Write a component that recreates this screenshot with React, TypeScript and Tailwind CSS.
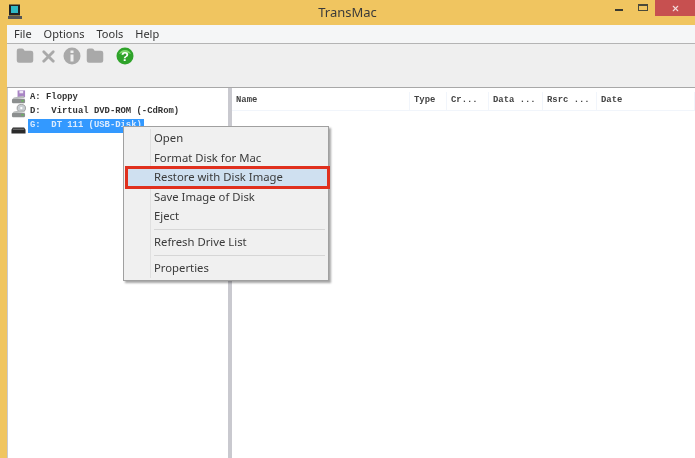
import { Folder, X } from 'lucide-react'

const menus = [
  { label: 'File', cls: 'ml-[7px]' },
  { label: 'Options', cls: 'ml-[12px]' },
  { label: 'Tools', cls: 'ml-[12px]' },
  { label: 'Help', cls: 'ml-[12px]' },
]

const columns = [
  { label: 'Name', cls: 'w-[178px]' },
  { label: 'Type', cls: 'w-[37px]' },
  { label: 'Cr...', cls: 'w-[42px]' },
  { label: 'Data ...', cls: 'w-[54px]' },
  { label: 'Rsrc ...', cls: 'w-[54px]' },
  { label: 'Date', cls: 'flex-1' },
]

function DriveIcon({ kind }: { kind: 'floppy' | 'cd' }) {
  return (
    <svg width="15" height="14" viewBox="0 0 16 17" preserveAspectRatio="none" className="shrink-0 -mt-[2px]">
      {kind === 'floppy' ? (
        <g>
          <rect x="7" y="0.5" width="8" height="8" fill="#a884c4" />
          <rect x="9" y="1" width="4" height="3" fill="#efe6f5" />
        </g>
      ) : (
        <g>
          <circle cx="11" cy="5" r="4.5" fill="#c9ced2" stroke="#777" strokeWidth="0.7" />
          <circle cx="11" cy="5" r="1.3" fill="#fff" />
        </g>
      )}
      <path d="M3 9 L13 7 L15 10 L1 11.5 Z" fill="#b9bcbc" />
      <rect x="1" y="11" width="14" height="5" rx="1" fill="#8c8f8f" />
      <rect x="11" y="12.5" width="2.5" height="1.5" fill="#5cc04c" />
    </svg>
  )
}

function UsbIcon() {
  return (
    <svg width="15" height="7" viewBox="0 0 16 8" preserveAspectRatio="none" className="shrink-0 mt-[8px]">
      <path d="M2 0.5 H14 L15.5 3 V7.5 H0.5 V3 Z" fill="#2b2b2b" />
      <rect x="2" y="2" width="12" height="1" fill="#8a8a8a" />
    </svg>
  )
}

function HelpIcon() {
  return (
    <svg width="18" height="18" viewBox="0 0 18 18">
      <circle cx="9" cy="9" r="8.5" fill="#2fa32a" />
      <path d="M3 7 A6.5 6.5 0 0 1 15 7 Q9 4.5 3 7 Z" fill="#7fd86d" />
      <text x="9" y="14" textAnchor="middle" fontSize="13" fontWeight="700" fill="#fff" fontFamily="Liberation Sans, sans-serif">?</text>
    </svg>
  )
}

function ContextMenu() {
  const Item = ({ label }: { label: string }) => (
    <div className="h-[19.5px] pl-[30px] flex items-center text-[11.3px] text-[#3a3a3a]">{label}</div>
  )
  return (
    <div className="absolute left-[123px] top-[126px] w-[206px] h-[155px] bg-[#f0f0f0] border border-[#a0a0a0] shadow-[2px_2px_2px_rgba(0,0,0,0.35)] font-['Noto_Sans',sans-serif] pt-[2px]">
      <div className="absolute left-[26px] top-[2px] bottom-[2px] w-px bg-[#e0e0e0]" />
      <Item label="Open" />
      <Item label="Format Disk for Mac" />
      <div className="relative ml-[1px] -mr-[2px] h-[23px] -my-[1.7px] border-[3px] border-[#e0301e] bg-[#cfe0f0] pl-[26px] flex items-center text-[11.3px] text-[#3a3a3a]">
        Restore with Disk Image
      </div>
      <Item label="Save Image of Disk" />
      <Item label="Eject" />
      <div className="ml-[30px] mr-[3px] my-[2.5px] h-px bg-[#d6d6d6]" />
      <div className="h-[19px] pl-[30px] flex items-center text-[11.3px] text-[#3a3a3a]">Refresh Drive List</div>
      <div className="ml-[30px] mr-[3px] my-[3px] h-px bg-[#d6d6d6]" />
      <div className="h-[19px] pl-[30px] flex items-center text-[11.3px] text-[#3a3a3a]">Properties</div>
    </div>
  )
}

export default function App() {
  return (
    <div className="relative w-[695px] h-[458px] overflow-hidden bg-[#f0c560] flex flex-col font-['Noto_Sans',sans-serif] blur-[0.4px]">
      {/* Title bar */}
      <div className="relative h-[25px] shrink-0 flex items-center justify-center text-[13px] text-[#3a3a3a]">
        <svg width="16" height="16" viewBox="0 0 16 16" className="absolute left-[7px] top-[4px]">
          <rect x="2" y="0.5" width="11" height="11" fill="#222" />
          <rect x="4" y="2" width="7" height="7" fill="#2fb8c4" />
          <rect x="1" y="12" width="14" height="3" fill="#555" />
        </svg>
        TransMac
        <div className="absolute right-0 top-0 w-[40px] h-[16px] bg-[#c75050] flex items-center justify-center">
          <X size={9} strokeWidth={3} className="text-[#f3dcdc]" />
        </div>
        <div className="absolute left-[638px] top-[4px] w-[10px] h-[7px] border border-[#4a4a3a] border-t-2" />
        <div className="absolute left-[615px] top-[9px] w-[8px] h-[2px] bg-[#3a3a30]" />
      </div>

      <div className="flex-1 ml-[7px] flex flex-col min-h-0">
        {/* Menu */}
        <div className="h-[18px] shrink-0 bg-[#f5f6f7] flex items-center text-[11px] text-[#333]">
          {menus.map((m) => (
            <span key={m.label} className={m.cls}>{m.label}</span>
          ))}
        </div>
        <div className="h-px shrink-0 bg-[#b4b4b4]" />

        {/* Toolbar */}
        <div className="h-[44px] shrink-0 bg-[#efefef] flex items-start pt-[3px] pl-[9px] border-b border-[#a8a8a8]">
          <Folder size={18} className="text-[#a9a9a9] fill-[#a9a9a9]" />
          <X size={19} strokeWidth={3.5} className="ml-[5px] text-[#a9a9a9]" />
          <svg width="18" height="18" viewBox="0 0 18 18" className="ml-[5px]">
            <circle cx="9" cy="9" r="8.5" fill="#a9a9a9" />
            <rect x="7.5" y="7.5" width="3" height="7" fill="#efefef" />
            <rect x="7.5" y="3.5" width="3" height="2.5" fill="#efefef" />
          </svg>
          <Folder size={18} className="ml-[5px] text-[#a9a9a9] fill-[#a9a9a9]" />
          <div className="ml-[12px]"><HelpIcon /></div>
        </div>

        {/* Panes */}
        <div className="flex-1 flex min-h-0 bg-[#c9c9cf]">
          <div className="ml-px w-[220px] shrink-0 bg-white pt-[3px] pl-[3px] font-['Liberation_Mono',monospace] font-bold text-[8.9px] text-[#333] whitespace-pre">
            <div className="h-[14px] flex items-center gap-[1px]"><DriveIcon kind="floppy" /><span className="pl-[3px]">A: Floppy</span></div>
            <div className="h-[14px] flex items-center gap-[1px]"><DriveIcon kind="cd" /><span className="pl-[3px]">D:  Virtual DVD-ROM (-CdRom)</span></div>
            <div className="h-[14px] flex items-start gap-[2px]">
              <UsbIcon />
              <span className="bg-[#3399ff] text-[#dcecff] h-[14px] leading-[13px] pl-[2px] pr-[2px]">G:  DT 111 (USB-Disk)</span>
            </div>
          </div>
          <div className="ml-[4px] flex-1 bg-white">
            <div className="h-[23px] flex items-center pt-[4px] border-b border-[#f1f5fb] font-['Liberation_Mono',monospace] font-bold text-[8.9px] text-[#444]">
              {columns.map((c) => (
                <div key={c.label} className={`${c.cls} h-full flex items-center pl-[4px] border-r border-[#f1f5fb] whitespace-pre`}>
                  {c.label}
                </div>
              ))}
            </div>
          </div>
        </div>
      </div>

      <ContextMenu />
    </div>
  )
}
